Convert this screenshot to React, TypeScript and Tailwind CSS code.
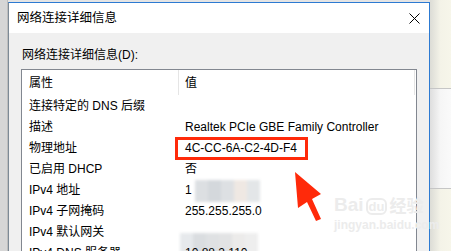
const FONT = "font-['Liberation_Sans','Noto_Sans_CJK_SC',sans-serif]";

type Row = { name: string; value?: string; blur?: "addr" | "gw"; boxed?: boolean };

const ROWS: Row[] = [
  { name: "连接特定的 DNS 后缀" },
  { name: "描述", value: "Realtek PCIe GBE Family Controller" },
  { name: "物理地址", value: "4C-CC-6A-C2-4D-F4", boxed: true },
  { name: "已启用 DHCP", value: "否" },
  { name: "IPv4 地址", value: "1", blur: "addr" },
  { name: "IPv4 子网掩码", value: "255.255.255.0" },
  { name: "IPv4 默认网关", blur: "gw" },
  { name: "IPv4 DNS 服务器", value: "10.88.2.110" },
];

const Mosaic = ({ kind }: { kind: "addr" | "gw" }) => {
  const colors =
    kind === "addr"
      ? ["#dcdfe2", "#d4d8dc", "#dde0e3", "#efe8e3", "#e3e6e8"]
      : ["#e6e9ec", "#dadde0", "#dfe1e3", "#e2e3e4", "#ecebea", "#eeeeee"];
  return (
    <div
      className={
        kind === "addr"
          ? "absolute left-[16px] top-[-1px] flex h-[22px] blur-[1.5px]"
          : "absolute left-[1px] top-[1px] flex h-[22px] blur-[1.5px]"
      }
    >
      {colors.map((c, i) => (
        <div key={i} className="h-full w-[13px]" style={{ backgroundColor: c }} />
      ))}
    </div>
  );
};

const CloseIcon = () => (
  <svg width="11" height="11" viewBox="0 0 11 11" className="text-black">
    <path d="M0.5 0.5 L10.5 10.5 M10.5 0.5 L0.5 10.5" stroke="currentColor" strokeWidth="1" />
  </svg>
);

const Arrow = () => (
  <svg className="absolute left-0 top-0" width="451" height="251" viewBox="0 0 451 251">
    <polygon
      points="295,172 321,194 312,199 321,219 316,221 307,202 298,208"
      fill="#ff2a0a"
    />
  </svg>
);

const Watermark = () => (
  <div className="absolute left-[334px] top-[195px] flex flex-col items-start text-[#ececec]">
    <div className="flex items-end gap-[2px] font-['Liberation_Sans',sans-serif] text-[19px] font-bold leading-[20px]">
      <span>Bai</span>
      <span className="rounded-[6px] border-2 border-[#ececec] px-[1px] text-[13px] leading-[13px]">du</span>
      <span className="font-['Noto_Sans_CJK_SC',sans-serif] text-[17px]">经验</span>
    </div>
    <div className="mt-[4px] text-[12px] font-bold leading-[12px]">jingyan.baidu.com</div>
  </div>
);

export default function App() {
  return (
    <div className={`relative flex h-[251px] w-[451px] overflow-hidden bg-[#e4e4e4] text-[12px] text-black ${FONT}`}>
      {/* window behind */}
      <div className="w-[8px] shrink-0 border-r border-[#bdbdbd] bg-[#d6d6d6]" />

      {/* dialog */}
      <div className="mt-[2px] flex w-[422px] shrink-0 flex-col overflow-hidden border border-b-0 border-[#2c7ad2] border-l-[#7d8a96] bg-[#f0f0f0]">
        <div className="flex h-[30px] shrink-0 items-center justify-between bg-white pl-[8px] pr-[9px]">
          <span className="text-[12.5px]">网络连接详细信息</span>
          <CloseIcon />
        </div>

        <div className="flex shrink-0 flex-col pl-[12px] pt-[14px]">
          <div className="pl-[1px] leading-[16px]">网络连接详细信息(D):</div>

          <div className="mt-[6px] w-[396px] border border-b-0 border-[#828790] bg-white">
            <div className="flex h-[25px] items-center">
              <div className="w-[156px] pl-[7px]">属性</div>
              <div className="h-full w-px bg-[#e5e5e5]" />
              <div className="flex-1 pl-[6px]">值</div>
              <div className="mr-[1px] h-full w-px bg-[#e5e5e5]" />
            </div>

            {ROWS.map((r) => (
              <div key={r.name} className="relative flex h-[21px] shrink-0 items-center">
                <div className="w-[157px] pl-[7px]">{r.name}</div>
                <div className="relative flex-1 pl-[6px]">
                  {r.value}
                  {r.blur && <Mosaic kind={r.blur} />}
                </div>
                {r.boxed && (
                  <div className="absolute left-[153px] top-0 h-[23px] w-[133px] border-[3px] border-[#ff2a0a]" />
                )}
              </div>
            ))}
          </div>
        </div>
      </div>

      {/* desktop on the right */}
      <div className="flex flex-1 flex-col">
        <div className="h-[88px] bg-gradient-to-r from-[#dcdcd6] via-[#f4f3e8] to-[#f7f6ea]" />
        <div className="h-px bg-[#c6c6c6]" />
        <div className="h-[99px] bg-gradient-to-r from-[#dedede] via-[#f6f6f6] to-[#fafafa]" />
        <div className="h-px bg-[#c6c6c6]" />
        <div className="flex-1 bg-gradient-to-r from-[#dcdcd6] via-[#f4f3e8] to-[#f7f6ea]" />
      </div>

      <Watermark />
      <Arrow />
    </div>
  );
}
